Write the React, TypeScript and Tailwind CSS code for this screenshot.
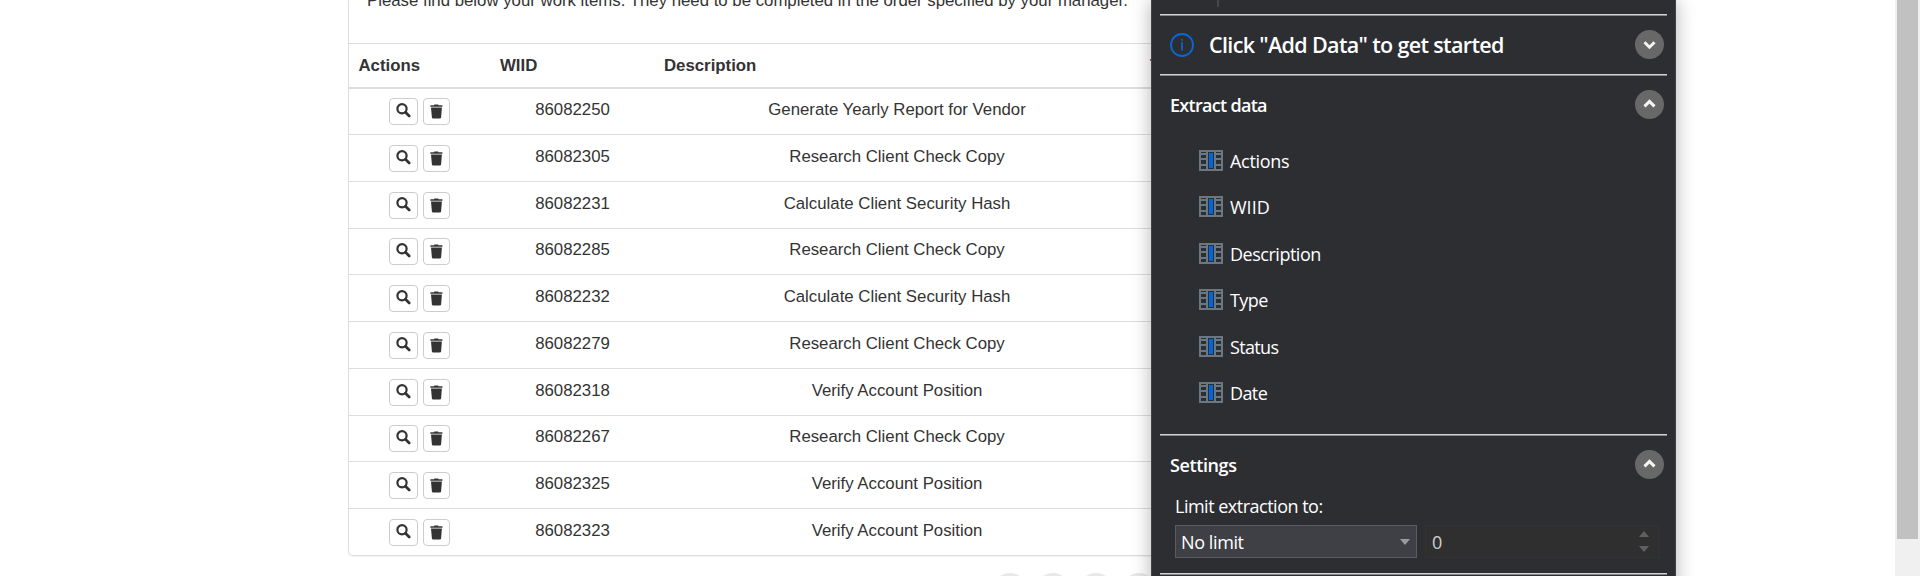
import React from "react";

type WorkItem = { id: string; description: string; size: string };

const ITEMS: WorkItem[] = [
  { id: "86082250", description: "Generate Yearly Report for Vendor", size: "h-[46px] pt-[9px]" },
  { id: "86082305", description: "Research Client Check Copy", size: "h-[47px] pt-[10px]" },
  { id: "86082231", description: "Calculate Client Security Hash", size: "h-[47px] pt-[10px]" },
  { id: "86082285", description: "Research Client Check Copy", size: "h-[46px] pt-[9px]" },
  { id: "86082232", description: "Calculate Client Security Hash", size: "h-[47px] pt-[10px]" },
  { id: "86082279", description: "Research Client Check Copy", size: "h-[47px] pt-[10px]" },
  { id: "86082318", description: "Verify Account Position", size: "h-[47px] pt-[10px]" },
  { id: "86082267", description: "Research Client Check Copy", size: "h-[46px] pt-[9px]" },
  { id: "86082325", description: "Verify Account Position", size: "h-[47px] pt-[10px]" },
  { id: "86082323", description: "Verify Account Position", size: "h-[47px] pt-[10px]" },
];

const COLUMNS = [
  { name: "Actions", size: "h-[46px]", tracking: "tracking-[-0.3px]" },
  { name: "WIID", size: "h-[47px]", tracking: "tracking-[0px]" },
  { name: "Description", size: "h-[46px]", tracking: "tracking-[-0.48px]" },
  { name: "Type", size: "h-[47px]", tracking: "tracking-[-0.6px]" },
  { name: "Status", size: "h-[46px]", tracking: "tracking-[-0.65px]" },
  { name: "Date", size: "h-[47px]", tracking: "tracking-[-0.6px]" },
];

function SearchIcon() {
  return (
    <svg width="15" height="15" viewBox="0 0 15 15" fill="none" stroke="#333">
      <circle cx="6" cy="5.8" r="4.6" strokeWidth="2.2" />
      <path d="M9.5 9.3 13.2 13" strokeWidth="2.7" strokeLinecap="round" />
    </svg>
  );
}

function TrashIcon() {
  return (
    <svg width="13" height="15" viewBox="0 0 13 15" fill="#333">
      <path d="M4.2 0.5h4.2v0.8H12a0.5 0.5 0 0 1 .5.5v1H.3v-1a0.5 0.5 0 0 1 .5-.5h3.4z" />
      <path d="M1 3.6h10.9l-.8 10a.9.9 0 0 1-.9.8H2.8a.9.9 0 0 1-.9-.8z" />
    </svg>
  );
}

function ColumnIcon() {
  return (
    <svg width="24" height="21" viewBox="0 0 24 21" shapeRendering="crispEdges">
      <rect width="24" height="21" fill="#697883" />
      <g fill="#2d2e32">
        <rect x="2" y="2" width="5" height="1" />
        <rect x="2" y="5" width="5" height="3" />
        <rect x="2" y="10" width="5" height="4" />
        <rect x="2" y="16" width="5" height="3" />
        <rect x="17" y="2" width="5" height="1" />
        <rect x="17" y="5" width="5" height="3" />
        <rect x="17" y="10" width="5" height="4" />
        <rect x="17" y="16" width="5" height="3" />
        <rect x="9" y="2" width="6" height="17" />
      </g>
      <rect x="10" y="3" width="4" height="15" fill="#0066dc" />
    </svg>
  );
}

function Toggle({ down = false }: { down?: boolean }) {
  return (
    <button className="mb-px flex size-[29px] shrink-0 items-center justify-center rounded-full bg-[#686868]">
      <svg width="29" height="29" viewBox="0 0 29 29" fill="none" stroke="#f4f4f4" strokeWidth="3">
        <path d={down ? "M9.5 12.2l5 5 5-5" : "M9.5 16.4l5-5 5 5"} />
      </svg>
    </button>
  );
}

function Rule() {
  return <div className="mx-2 h-[2px] border-b border-[#85878a] bg-[#cfd1d3]" />;
}

function WorkItems() {
  return (
    <main className="w-[1000px] shrink-0 text-[16.8px] leading-6 text-[#333]">
      <section className="h-[556px] overflow-hidden rounded-b-[5px] border border-t-0 border-[#ddd] shadow-[0_1px_1px_rgba(0,0,0,0.05)]">
        <p className="-mt-[11px] h-[54px] pl-[18px] whitespace-nowrap">
          Please find below your work items. They need to be completed in the order specified by your manager.
        </p>
        <div className="flex h-[46px] border-t border-b-2 border-[#ddd] pt-[10px] font-bold">
          <div className="w-[142px] pl-[9.5px]">Actions</div>
          <div className="w-[164px] pl-[9px]">WIID</div>
          <div className="w-[486px] pl-[9px]">Description</div>
          <div className="pl-[9px]">Type</div>
        </div>
        {ITEMS.map((item) => (
          <div key={item.id} className={"flex border-b border-[#ddd] last:border-b-0 " + item.size}>
            <div className="flex w-[142px] gap-[5px] pl-[40px]">
              <button className="flex h-[27px] w-[29px] items-center justify-center rounded-[4px] border border-[#ccc] pr-px pb-[2px]">
                <SearchIcon />
              </button>
              <button className="flex h-[27px] w-[27px] items-center justify-center rounded-[4px] border border-[#ccc] pb-px">
                <TrashIcon />
              </button>
            </div>
            <div className="w-[164px] pr-[1px] text-center">{item.id}</div>
            <div className="w-[486px] pr-[2px] text-center">{item.description}</div>
          </div>
        ))}
      </section>
      <div className="mt-[17px] flex gap-[9px] pl-[645px]">
        <i className="size-[34px] rounded-full bg-[#e8e8e8]" />
        <i className="size-[34px] rounded-full bg-[#e8e8e8]" />
        <i className="size-[34px] rounded-full bg-[#e8e8e8]" />
        <i className="size-[34px] rounded-full bg-[#e8e8e8]" />
      </div>
    </main>
  );
}

function ExtractPanel() {
  return (
    <aside className="absolute top-0 left-[1151px] h-[640px] w-[525px] border-x border-[#424348] bg-[#2d2e32] font-['Open_Sans','Noto_Sans',sans-serif] text-[18px] leading-6 text-white shadow-[0_0_18px_rgba(0,0,0,0.3)]">
      <div className="h-[14px] pl-[65px]">
        <div className="h-[7px] w-[2px] bg-[#46474c]" />
      </div>
      <Rule />
      <div className="flex h-[58px] items-center pr-[11px] pl-[18px]">
        <svg width="24" height="24" viewBox="0 0 24 24" fill="none" stroke="#0a66d8">
          <circle cx="12" cy="12" r="11" strokeWidth="1.8" />
          <path d="M12 9.3v8.5M12 6v1.8" strokeWidth="1.7" />
        </svg>
        <h1 className="grow pl-[15px] text-[21.5px] font-semibold tracking-[-0.65px] whitespace-nowrap">
          Click "Add Data" to get started
        </h1>
        <Toggle down />
      </div>
      <Rule />
      <div className="flex h-[58px] items-center pr-[11px] pl-[18px]">
        <h2 className="grow font-semibold tracking-[-0.7px]">Extract data</h2>
        <Toggle />
      </div>
      <ul className="mb-[22px] h-[278px] pt-[4px] pl-[47px]">
        {COLUMNS.map((column) => (
          <li key={column.name} className={"flex items-start gap-[7px] pt-3 " + column.size}>
            <ColumnIcon />
            <span className={"-mt-px " + column.tracking}>{column.name}</span>
          </li>
        ))}
      </ul>
      <Rule />
      <div className="flex h-[58px] items-center pr-[11px] pl-[18px]">
        <h2 className="grow font-semibold tracking-[-0.4px]">Settings</h2>
        <Toggle />
      </div>
      <div className="h-[79px] pr-[15px] pl-[23px]">
        <label className="block h-[31px] tracking-[-0.5px]">Limit extraction to:</label>
        <div className="flex h-[33px] gap-2">
          <div className="flex w-[242px] items-center justify-between border border-[#5b5c61] bg-[#3f4045] pr-[6px] pl-[5px]">
            <span className="tracking-[-0.4px]">No limit</span>
            <svg width="10" height="6" viewBox="0 0 10 6" fill="#9b9b9e">
              <path d="M0 0h10L5 6z" />
            </svg>
          </div>
          <div className="flex w-[235px] items-center justify-between border border-[#333336] bg-[#2f2f30] pr-[10px] pl-[6px] text-[#d0d0d0]">
            <span>0</span>
            <svg width="10" height="21" viewBox="0 0 10 21" fill="#5f6063">
              <path d="M0 6h10L5 0zM0 15h10l-5 6z" />
            </svg>
          </div>
        </div>
      </div>
      <Rule />
    </aside>
  );
}

export default function App() {
  return (
    <div className="relative flex h-[576px] w-[1920px] justify-between overflow-hidden bg-white pl-[348px] font-['Liberation_Sans',Arial,sans-serif]">
      <WorkItems />
      <ExtractPanel />
      <div className="h-full w-[25px] bg-[#f0f0f0] px-[2px]">
        <div className="h-[539px] bg-[#c1c1c1]" />
      </div>
    </div>
  );
}
